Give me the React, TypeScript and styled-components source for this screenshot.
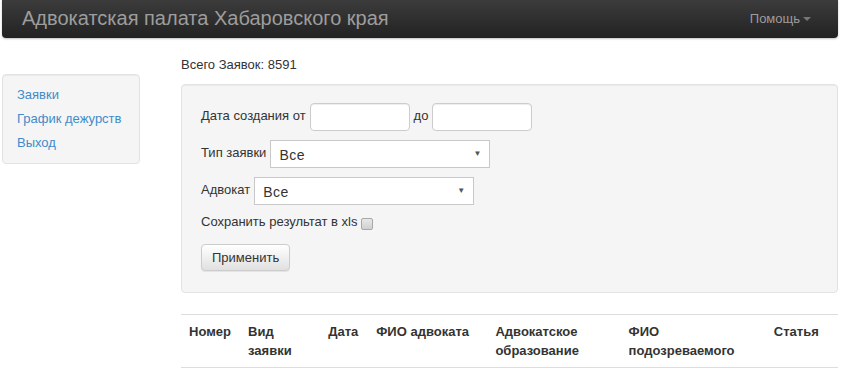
import styled, { createGlobalStyle } from "styled-components";

const GlobalStyle = createGlobalStyle`
  html, body {
    margin: 0;
    padding: 0;
    background: #fff;
  }

  body {
    font-family: "Liberation Sans", Arial, sans-serif;
    font-size: 14px;
    line-height: 20px;
    color: #333;
  }

  * {
    box-sizing: border-box;
  }
`;

const columns = [
  { title: "Номер", width: 59 },
  { title: "Вид заявки", width: 80 },
  { title: "Дата", width: 48 },
  { title: "ФИО адвоката", width: 119 },
  { title: "Адвокатское образование", width: 133 },
  { title: "ФИО подозреваемого", width: 145 },
  { title: "Статья", width: 72 },
];

const App = () => {
  return (
    <Wrapper>
      <GlobalStyle />
      <Navbar>
        <Brand>Адвокатская палата Хабаровского края</Brand>
        <NavMenu>
          Помощь
          <Caret />
        </NavMenu>
      </Navbar>
      <Layout>
        <Sidebar>
          <NavLink href="#">Заявки</NavLink>
          <NavLink href="#">График дежурств</NavLink>
          <NavLink href="#">Выход</NavLink>
        </Sidebar>
        <Main>
          <Total>Всего Заявок: 8591</Total>
          <FilterWell>
            <FormRow>
              <Label>Дата создания от</Label>
              <TextInput type="text" />
              <Label>до</Label>
              <TextInput type="text" />
            </FormRow>
            <FormRow>
              <Label>Тип заявки</Label>
              <SelectWrap>
                <Select defaultValue="all">
                  <option value="all">Все</option>
                </Select>
                <Arrow>▼</Arrow>
              </SelectWrap>
            </FormRow>
            <FormRow>
              <Label>Адвокат</Label>
              <SelectWrap>
                <Select defaultValue="all">
                  <option value="all">Все</option>
                </Select>
                <Arrow>▼</Arrow>
              </SelectWrap>
            </FormRow>
            <CheckRow>
              <Label>Сохранить результат в xls</Label>
              <Checkbox type="checkbox" />
            </CheckRow>
            <Button type="button">Применить</Button>
          </FilterWell>
          <Table>
            <thead>
              <tr>
                {columns.map((c) => (
                  <Th key={c.title} style={{ width: c.width }}>
                    {c.title}
                  </Th>
                ))}
              </tr>
            </thead>
          </Table>
        </Main>
      </Layout>
    </Wrapper>
  );
};

export default App;

const Wrapper = styled.div`
  width: 836px;
  margin-left: 2px;
`;

const Navbar = styled.div`
  height: 38px;
  display: flex;
  align-items: center;
  justify-content: space-between;
  padding: 0 27px 0 20px;
  background: linear-gradient(to bottom, #3c3c3c 0%, #222 100%);
  border-radius: 0 0 4px 4px;
  box-shadow: 0 1px 2px rgba(0, 0, 0, 0.25);
`;

const Brand = styled.div`
  font-size: 20px;
  color: #9d9d9d;
  margin-top: -2px;
`;

const NavMenu = styled.div`
  display: flex;
  align-items: center;
  font-size: 13px;
  color: #9d9d9d;
`;

const Caret = styled.span`
  display: inline-block;
  width: 0;
  height: 0;
  margin-left: 3px;
  border-top: 4px solid #777;
  border-left: 4px solid transparent;
  border-right: 4px solid transparent;
`;

const Layout = styled.div`
  display: flex;
  align-items: flex-start;
`;

const Sidebar = styled.div`
  width: 138px;
  margin-top: 36px;
  padding: 8px 14px;
  display: flex;
  flex-direction: column;
  background: #f5f5f5;
  border: 1px solid #e3e3e3;
  border-radius: 4px;
  box-shadow: inset 0 1px 1px rgba(0, 0, 0, 0.05);
`;

const NavLink = styled.a`
  font-size: 13px;
  line-height: 24px;
  white-space: nowrap;
  color: #428bca;
  text-decoration: none;
`;

const Main = styled.div`
  flex: 1;
  margin-left: 41px;
  padding-top: 17px;
`;

const Total = styled.div`
  line-height: 20px;
  font-size: 13px;
  margin-bottom: 9px;
`;

const FilterWell = styled.div`
  padding: 18px 19px 21px 19px;
  background: #f5f5f5;
  border: 1px solid #e3e3e3;
  border-radius: 4px;
  box-shadow: inset 0 1px 1px rgba(0, 0, 0, 0.05);
  display: flex;
  flex-direction: column;
  align-items: flex-start;
`;

const FormRow = styled.div`
  display: flex;
  align-items: center;
  gap: 4px;
  margin-bottom: 9px;
`;

const CheckRow = styled(FormRow)`
  margin-top: 1px;
  margin-bottom: 12px;
`;

const Label = styled.span`
  font-size: 13px;
  margin-top: -3px;
`;

const TextInput = styled.input`
  width: 100px;
  height: 28px;
  border: 1px solid #ccc;
  border-radius: 4px;
  background: #fff;
  box-shadow: inset 0 1px 1px rgba(0, 0, 0, 0.075);
  padding: 4px 8px;
  font: inherit;
`;

const SelectWrap = styled.div`
  position: relative;
  width: 220px;
  height: 28px;
`;

const Select = styled.select`
  appearance: none;
  width: 100%;
  height: 100%;
  border: 1px solid #c8c8c8;
  border-radius: 0;
  background: #fff;
  padding: 2px 8px 0 8px;
  font-family: "Liberation Sans", Arial, sans-serif;
  font-size: 14px;
  letter-spacing: 0.5px;
  color: #333;
`;

const Arrow = styled.span`
  position: absolute;
  right: 9px;
  top: 9px;
  font-size: 8px;
  line-height: 10px;
  color: #555;
  pointer-events: none;
`;

const Checkbox = styled.input`
  appearance: none;
  width: 12px;
  height: 12px;
  margin: 1px 0 0 0;
  border: 1px solid #a8a8a8;
  border-radius: 2px;
  background: linear-gradient(to bottom, #e8e8e8, #cfcfcf);
`;

const Button = styled.button`
  height: 27px;
  padding: 0 10px;
  font-family: "Liberation Sans", Arial, sans-serif;
  font-size: 13px;
  color: #333;
  border: 1px solid #ccc;
  border-radius: 4px;
  background: linear-gradient(to bottom, #fff 0%, #e0e0e0 100%);
  box-shadow: inset 0 1px 0 rgba(255, 255, 255, 0.15),
    0 1px 1px rgba(0, 0, 0, 0.075);
`;

const Table = styled.table`
  width: 100%;
  margin-top: 21px;
  border-collapse: collapse;
  table-layout: fixed;
`;

const Th = styled.th`
  text-align: left;
  vertical-align: top;
  font-size: 13px;
  font-weight: bold;
  line-height: 19px;
  padding: 7px 8px 7px 8px;
  border-top: 1px solid #ddd;
  border-bottom: 1px solid #ddd;
`;
